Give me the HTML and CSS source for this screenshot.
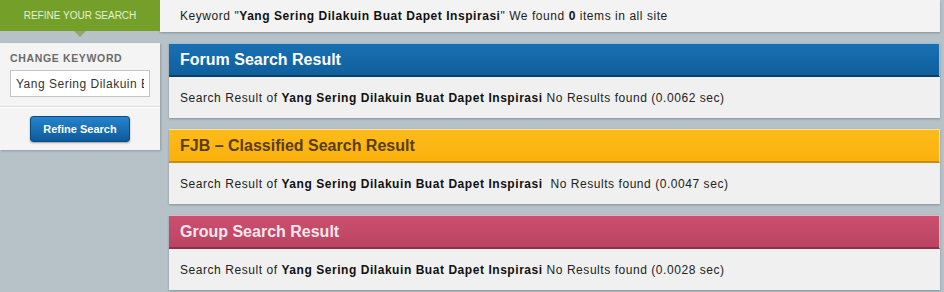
FILE: index.html
```html
<!DOCTYPE html>
<html>
<head>
<meta charset="utf-8">
<link rel="stylesheet" href="styles.css">
</head>
<body>
<div class="topbar">
  <div class="tab"><span>REFINE YOUR SEARCH</span><span class="tab-arrow"></span></div>
  <div class="summary"><p class="summary-text">Keyword "<b>Yang Sering Dilakuin Buat Dapet Inspirasi</b>" We found <b>0</b> items in all site</p></div>
</div>
<div class="content">
  <aside class="sidebar">
    <div class="side-top">
      <div class="side-label">CHANGE KEYWORD</div>
      <input class="kw-input" type="text" value="Yang Sering Dilakuin Buat Dapet Inspirasi">
    </div>
    <div class="side-bottom">
      <button class="refine-btn">Refine Search</button>
    </div>
  </aside>
  <main class="results">
    <section class="box forum">
      <h2 class="box-head">Forum Search Result</h2>
      <p class="box-body">Search Result of <b>Yang Sering Dilakuin Buat Dapet Inspirasi</b> No Results found (0.0062 sec)</p>
    </section>
    <section class="box fjb">
      <h2 class="box-head">FJB – Classified Search Result</h2>
      <p class="box-body">Search Result of <b>Yang Sering Dilakuin Buat Dapet Inspirasi</b>&nbsp; No Results found (0.0047 sec)</p>
    </section>
    <section class="box group">
      <h2 class="box-head">Group Search Result</h2>
      <p class="box-body">Search Result of <b>Yang Sering Dilakuin Buat Dapet Inspirasi</b> No Results found (0.0028 sec)</p>
    </section>
  </main>
</div>
</body>
</html>
```
FILE: styles.css
```css
html, body {
  margin: 0;
  padding: 0;
  background: #b6c1c8;
  font-family: "Liberation Sans", Arial, sans-serif;
  font-size: 12px;
  color: #222;
  width: 944px;
  height: 292px;
  overflow: hidden;
}
b { color: #111; }
.topbar {
  display: flex;
  height: 32px;
  width: 940px;
}
.tab {
  position: relative;
  width: 160px;
  background: #74a02a;
  color: #e6f0d6;
  font-size: 10px;
  display: flex;
  align-items: center;
  justify-content: center;
  height: 31px;
}
.tab-arrow {
  position: absolute;
  left: 74px;
  top: 31px;
  width: 0;
  height: 0;
  border-left: 6px solid transparent;
  border-right: 6px solid transparent;
  border-top: 6px solid #8ea56c;
}
.summary {
  flex: 1;
  background: #f3f3f3;
  box-shadow: 0 1px 2px rgba(0,0,0,0.25);
  padding-left: 20px;
}
.summary-text {
  margin: 0;
  line-height: 32px;
  letter-spacing: 0.55px;
  color: #222;
}
.content {
  display: flex;
  align-items: flex-start;
  margin-top: 11px;
  width: 940px;
}
.sidebar {
  width: 160px;
  background: #f4f4f4;
  box-shadow: 1px 1px 2px rgba(0,0,0,0.2);
}
.side-top {
  padding: 9px 10px 9px 10px;
  border-bottom: 1px solid #dcdcdc;
}
.side-label {
  font-size: 10.5px;
  font-weight: bold;
  color: #6a6a6a;
  letter-spacing: 0.65px;
  line-height: 13px;
}
.kw-input {
  display: block;
  margin-top: 5px;
  width: 140px;
  height: 27px;
  box-sizing: border-box;
  border: 1px solid #c4c4c4;
  background: #fff;
  font-family: "Liberation Sans", Arial, sans-serif;
  font-size: 12px;
  letter-spacing: 0.5px;
  color: #333;
  padding: 0 5px;
  outline: none;
}
.side-bottom {
  border-top: 1px solid #fff;
  padding: 8px 0 8px;
  display: flex;
  justify-content: center;
}
.refine-btn {
  width: 100px;
  height: 26px;
  border: 1px solid #0b4a80;
  border-radius: 3px;
  background: linear-gradient(#2584cc, #0e5a9c);
  color: #fff;
  font-family: "Liberation Sans", Arial, sans-serif;
  font-weight: bold;
  font-size: 11px;
  box-shadow: 0 1px 2px rgba(0,0,0,0.35);
  padding: 0;
}
.results {
  margin-left: 9px;
  flex: 1;
  display: flex;
  flex-direction: column;
  gap: 11px;
}
.box {
  background: #f0f0f0;
  box-shadow: 0 1px 2px rgba(0,0,0,0.25);
}
.box-head {
  margin: 0;
  height: 34px;
  box-sizing: border-box;
  padding-left: 11px;
  font-size: 16px;
  line-height: 32px;
  font-weight: bold;
  border-top: 1px solid rgba(255,255,255,0.6);
  border-right: 1px solid rgba(255,255,255,0.6);
}
.box-body {
  margin: 0;
  height: 41px;
  line-height: 42px;
  padding-left: 11px;
  color: #222;
  letter-spacing: 0.55px;
  white-space: nowrap;
}
.forum .box-head {
  background: linear-gradient(#1870b3, #0f5f9c);
  color: #fff;
  border-bottom: 2px solid #0b3e68;
}
.fjb .box-head {
  background: linear-gradient(#fdbb1a, #fbb10c);
  color: #5a3d08;
  border-bottom: 2px solid #c98c0e;
}
.group .box-head {
  background: linear-gradient(#cc4f70, #bb4462);
  color: #fbe6ec;
  border-bottom: 2px solid #8e3049;
}
```
